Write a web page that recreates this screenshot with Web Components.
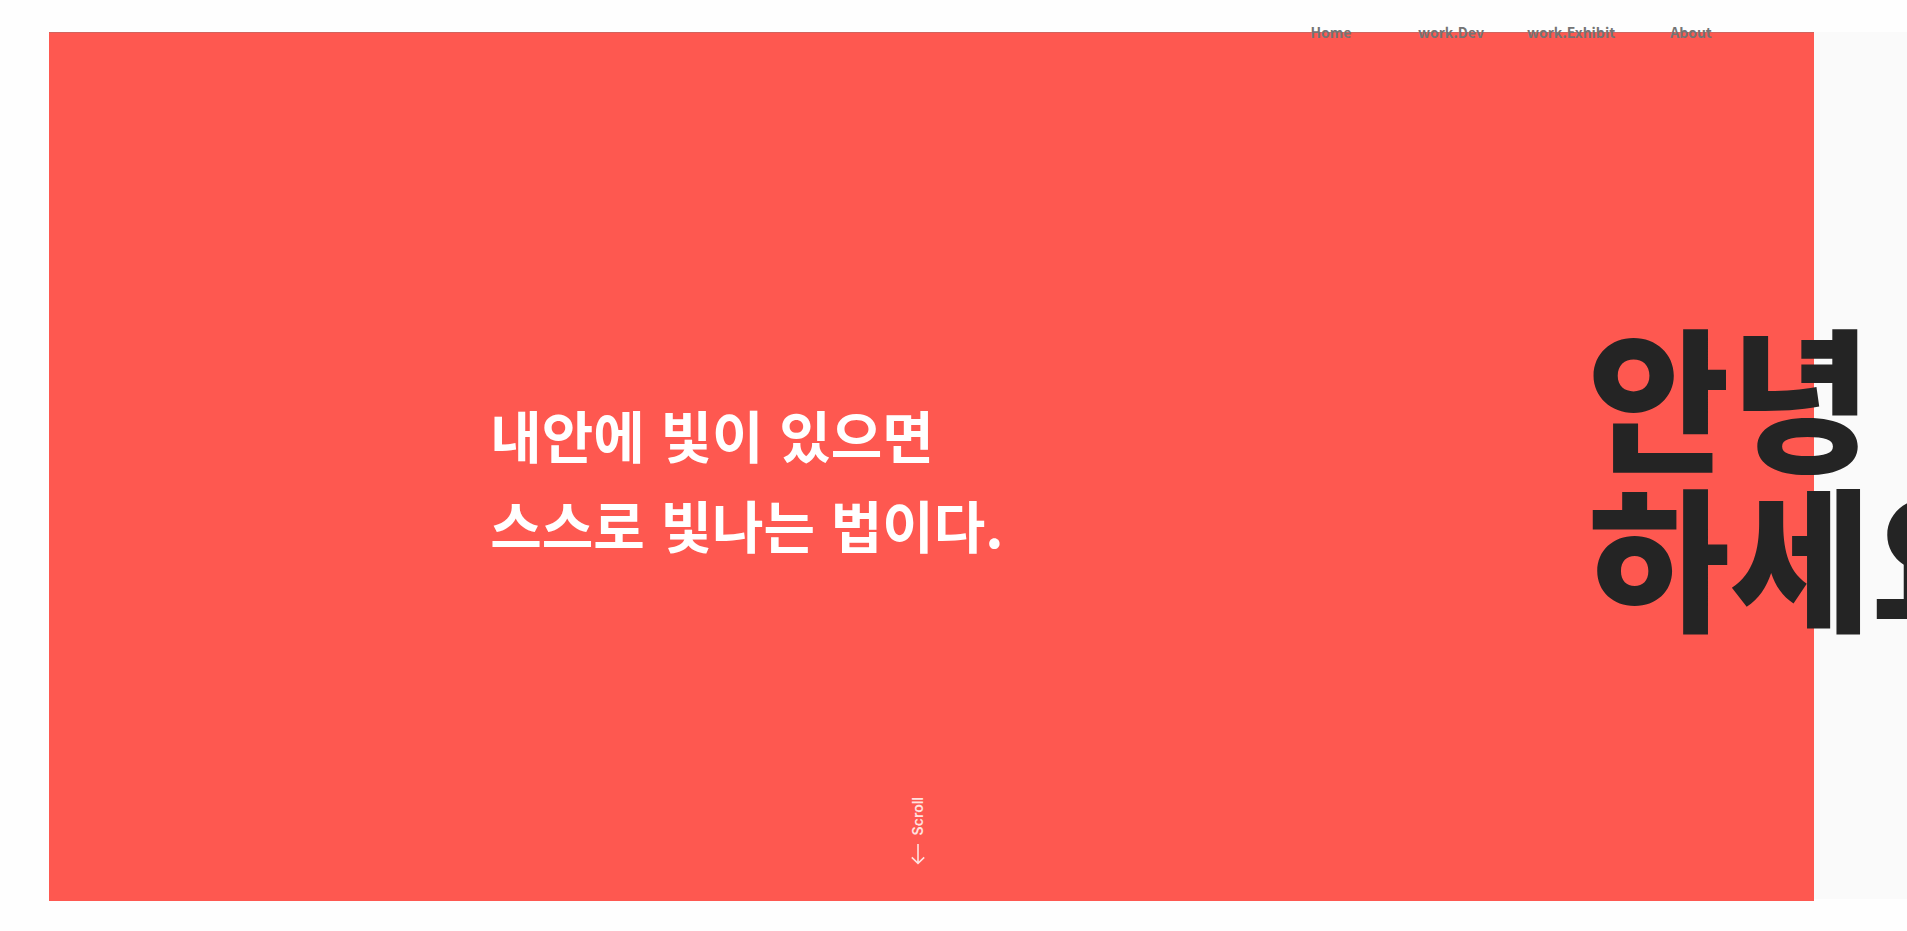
<!DOCTYPE html>
<html lang="ko">
<head>
<meta charset="utf-8">
<title>Portfolio</title>
<style>
html, body { margin: 0; height: 100%; background: #fefefe; }
body { overflow: hidden; font-family: "Noto Sans CJK KR", "Noto Sans", sans-serif; }
</style>
</head>
<body>
<portfolio-page></portfolio-page>
<script>
class BaseElement extends HTMLElement {
  constructor() {
    super();
    this.attachShadow({ mode: 'open' }).innerHTML = this.constructor.markup;
  }
}

class PortfolioPage extends BaseElement {
  static markup = `
    <style>
      :host { display: block; height: 100vh; box-sizing: border-box; padding: 32px 0 30px 49px; overflow: hidden; }
      site-nav { position: absolute; top: 16px; right: 156px; z-index: 2; }
      main { display: grid; grid-template-columns: calc(100vw - 142px) minmax(0, 1fr); height: 100%; }
    </style>
    <site-nav>
      <nav-item href="#home">Home</nav-item>
      <nav-item href="#dev">work.Dev</nav-item>
      <nav-item href="#exhibit">work.Exhibit</nav-item>
      <nav-item href="#about">About</nav-item>
    </site-nav>
    <main>
      <hero-panel>내안에 빛이 있으면<br>스스로 빛나는 법이다.</hero-panel>
      <greeting-panel>안녕<br>하세요</greeting-panel>
    </main>`;
}

class SiteNav extends BaseElement {
  static markup = `
    <style>
      :host { display: block; }
      nav { display: grid; grid-template-columns: repeat(4, 120px); }
    </style>
    <nav aria-label="Main"><slot></slot></nav>`;
}

class NavItem extends BaseElement {
  static markup = `
    <style>
      :host { display: block; text-align: center; }
      a { display: block; color: #747474; font-size: 14px; font-weight: 700; line-height: 32px; text-decoration: none; }
    </style>
    <a><slot></slot></a>`;
  connectedCallback() {
    this.shadowRoot.querySelector('a').setAttribute('href', this.getAttribute('href'));
  }
}

class HeroPanel extends BaseElement {
  static markup = `
    <style>
      :host { display: grid; align-items: center; box-sizing: border-box; background: #fe5850; border-top: 1px solid #d2635d; position: relative; }
      h2 { margin: 0; padding: 24px 0 0 25%; color: #fff; font-size: 56px; font-weight: 700; line-height: 90px; }
      scroll-cue { position: absolute; left: 0; right: 28px; bottom: 36px; }
    </style>
    <h2><slot></slot></h2>
    <scroll-cue>Scroll</scroll-cue>`;
}

class ScrollCue extends BaseElement {
  static markup = `
    <style>
      :host { display: flex; flex-direction: column; align-items: center; gap: 8px; color: #ffe3e0; font: 600 14px/20px Inter, sans-serif; }
      span { writing-mode: vertical-rl; transform: rotate(180deg); }
      svg { display: block; }
    </style>
    <span><slot></slot></span>
    <svg width="16" height="22" viewBox="0 0 16 22" fill="none" stroke="currentColor" stroke-width="1.6" aria-hidden="true"><path d="M8 1V20M1.8 14.4 8 20.4l6.200-6"/></svg>`;
}

class GreetingPanel extends BaseElement {
  static markup = `
    <style>
      :host { display: grid; align-items: center; box-sizing: border-box; margin-bottom: 2px; background: #fafafa; min-width: 0; }
      h1 { position: relative; margin: 0 0 0 -226px; padding-top: 14px; color: #242424; font-size: 154px; font-weight: 900; line-height: 160px; white-space: nowrap; }
    </style>
    <h1><slot></slot></h1>`;
}

customElements.define('nav-item', NavItem);
customElements.define('site-nav', SiteNav);
customElements.define('scroll-cue', ScrollCue);
customElements.define('hero-panel', HeroPanel);
customElements.define('greeting-panel', GreetingPanel);
customElements.define('portfolio-page', PortfolioPage);
</script>
</body>
</html>
